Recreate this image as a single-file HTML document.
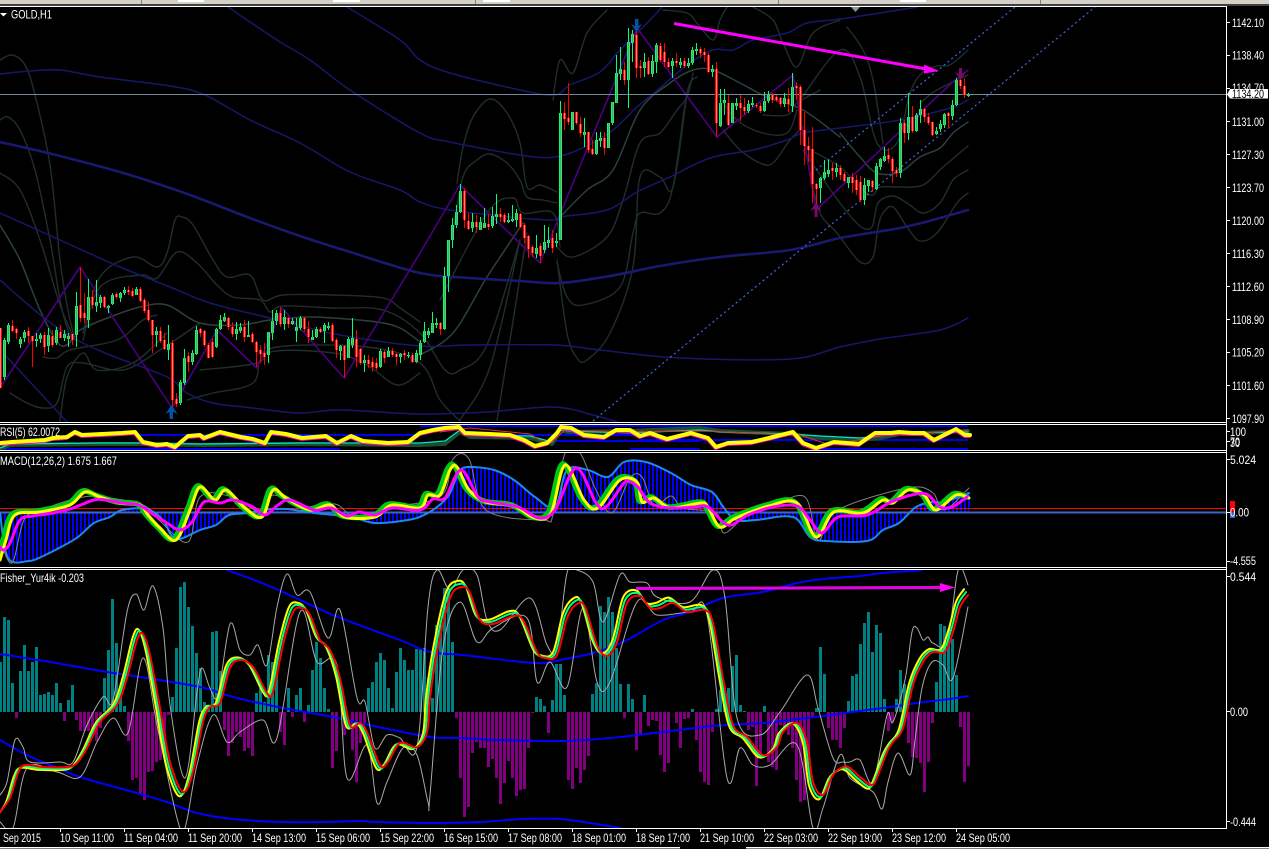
<!DOCTYPE html>
<html lang="en"><head><meta charset="utf-8"><title>GOLD,H1</title>
<style>
html,body{margin:0;padding:0;background:#000;width:1269px;height:849px;overflow:hidden}
svg{display:block}
text{font-family:"Liberation Sans",sans-serif;font-size:12px;fill:#fff}
.n{fill:none;stroke-linejoin:round;stroke-linecap:round}
</style></head><body>
<svg width="1269" height="849" viewBox="0 0 1269 849" xmlns="http://www.w3.org/2000/svg">
<defs>
<clipPath id="cm"><rect x="0" y="7" width="1226" height="415"/></clipPath>
<clipPath id="cr"><rect x="0" y="425" width="1226" height="25"/></clipPath>
<clipPath id="cd"><rect x="0" y="453" width="1226" height="114"/></clipPath>
<clipPath id="cf"><rect x="0" y="570" width="1226" height="258"/></clipPath>
<pattern id="hb" width="4" height="4" patternUnits="userSpaceOnUse"><rect x="0" y="0" width="2" height="4" fill="#0000ff"/></pattern>
<path id="gb" d="M4 340V377M8 325V342M20 339V344M24 332V338M36 339V341M40 335V339M48 335V346M56 330V343M64 334V338M68 336V339M76 306V335M88 297V320M96 302V306M100 297V303M108 306V308M112 295V304M120 293V298M124 290V293M136 289V295M156 331V335M168 344V350M180 382V403M184 358V383M192 353V362M196 330V354M216 329V347M220 320V329M224 317V321M236 329V334M240 327V331M248 335V337M268 332V355M272 321V333M276 313V321M284 317V324M292 321V324M296 327V331M300 318V328M312 337V340M316 329V337M324 325V331M328 326V328M340 346V351M348 339V358M352 338V345M364 360V363M380 351V367M388 351V357M400 354V357M408 355V356M416 353V362M420 343V355M424 331V342M428 331V335M432 323V333M436 323V325M444 276V329M448 240V276M452 225V240M456 212V225M460 191V212M472 222V228M480 222V230M484 223V228M492 216V226M496 214V217M508 220V222M512 219V221M516 213V220M536 248V254M544 242V250M548 240V243M556 241V243M560 113V240M572 112V130M584 132V135M596 140V154M600 138V141M608 123V148M612 102V123M616 73V103M620 69V74M628 42V80M632 34V43M644 62V68M652 61V74M656 45V62M672 61V66M680 62V65M688 63V66M692 50V63M696 49V51M712 69V72M720 103V126M724 100V103M732 103V123M736 103V106M748 104V111M752 103V105M764 101V111M768 95V101M784 98V104M792 87V106M820 178V188M824 172V178M828 170V174M836 168V172M848 177V183M864 185V200M868 180V186M876 166V189M880 159V167M884 156V161M900 123V173M908 117V133M916 115V131M920 109V115M936 131V134M940 124V129M944 114V125M952 105V116M956 80V105M968 95V96"/>
<path id="rb" d="M0 328V388M12 326V331M16 329V333M28 331V336M32 336V341M44 335V347M52 336V345M60 332V338M72 334V340M80 305V318M84 313V318M92 297V305M104 297V307M116 294V297M128 290V292M132 291V296M140 289V301M144 300V311M148 310V320M152 320V335M160 331V341M164 340V349M172 343V400M176 399V404M188 356V362M200 329V333M204 331V345M208 345V358M212 342V357M228 318V327M232 327V334M244 327V337M252 334V342M256 342V352M260 350V354M264 353V357M280 313V324M288 318V324M304 318V329M308 329V337M320 329V332M332 325V341M336 340V350M344 346V360M356 339V357M360 349V363M368 360V364M372 362V367M376 363V368M384 352V358M392 351V355M396 354V357M404 353V355M412 355V362M440 323V329M464 191V220M468 221V229M476 222V227M488 224V227M500 214V217M504 215V222M520 214V227M524 225V238M528 236V249M532 247V253M540 246V256M552 238V248M564 113V119M568 118V122M576 112V123M580 124V133M588 132V150M592 149V154M604 138V148M624 70V80M636 35V68M640 66V68M648 61V74M660 46V60M664 52V62M668 62V67M676 61V63M684 61V66M700 49V53M704 52V55M708 55V72M716 69V123M728 103V125M740 103V108M744 107V111M756 105V106M760 106V111M772 95V100M776 97V100M780 98V104M788 99V104M796 86V88M800 87V130M804 130V146M808 146V150M812 149V184M816 184V189M832 168V171M840 168V175M844 174V181M852 177V183M856 180V190M860 182V200M872 181V187M888 155V159M892 159V171M896 170V173M904 123V133M912 117V131M924 109V117M928 117V123M932 122V135M948 113V116M960 80V86M964 86V95"/>
<polyline id="fl" class="s" points="0,812 10,798 18,773 25,765 43,767 67,767 77,763 87,748 100,722 117,705 127,678 137,640 143,634 150,655 160,708 170,762 183,792 193,772 203,722 210,707 220,703 230,668 240,660 253,667 267,693 273,692 283,645 293,612 302,608 310,615 320,640 330,650 340,678 350,725 360,723 367,732 380,765 388,762 400,743 417,747 427,732 430,698 437,652 450,598 462,587 470,593 480,620 493,624 513,616 523,620 537,652 545,658 557,655 567,618 577,604 585,607 597,645 607,656 617,642 627,603 640,596 650,608 660,608 673,603 687,612 705,610 713,623 723,678 733,725 747,737 763,755 777,747 783,732 797,723 807,742 813,782 823,795 833,775 843,767 850,768 860,777 872,785 878,775 887,752 893,742 903,728 913,685 923,662 933,652 945,652 953,632 960,607 968,595"/>
<polyline id="my" class="s" points="0,560 6,540 15,515 40,512 70,505 85,492 100,497 120,503 140,505 148,515 160,528 176,540 190,510 200,487 215,500 226,490 245,508 262,517 273,490 286,498 310,510 330,505 345,517 375,517 392,505 420,508 428,495 440,495 450,470 457,467 469,490 486,502 514,506 535,518 551,513 565,465 584,500 598,508 620,480 637,482 642,502 654,498 671,508 701,503 708,507 720,527 736,518 769,506 797,503 816,537 834,512 863,513 883,500 893,503 908,490 924,495 936,510 956,495 969,498"/>
<polyline id="ry" points="0,443 12,442 45,440 53,438 67,437 75,432 82,435 102,434 122,433 135,432 143,442 157,445 167,444 175,447 188,436 200,435 204,438 220,432 241,437 253,439 265,443 271,432 286,434 302,438 314,437 326,436 337,443 351,436 363,441 388,443 408,442 420,433 433,430 445,428 459,427 465,433 490,434 510,435 524,440 535,446 547,443 557,433 561,427 571,428 584,435 604,437 616,430 630,430 640,436 650,433 667,439 691,433 708,438 716,447 728,443 752,442 769,438 793,432 803,443 816,448 834,442 859,444 875,433 891,433 899,432 912,433 924,433 934,440 956,429 965,435 970,435"/>
</defs>

<rect width="1269" height="849" fill="#000"/>

<!-- window chrome -->
<rect x="0" y="0" width="1269" height="4" fill="#d4d0c8"/>
<rect x="0" y="4" width="1269" height="2" fill="#404040"/>
<rect x="178" y="0" width="26" height="2" fill="#fff"/><rect x="333" y="0" width="27" height="2" fill="#fff"/>
<rect x="483" y="0" width="27" height="2" fill="#fff"/><rect x="900" y="0" width="26" height="2" fill="#fff"/>
<rect x="141" y="0" width="1" height="4" fill="#808080"/><rect x="475" y="0" width="1" height="4" fill="#808080"/><rect x="778" y="0" width="1" height="4" fill="#808080"/><rect x="1040" y="0" width="1" height="4" fill="#808080"/>

<!-- MAIN -->
<text x="11" y="18.5" textLength="41" lengthAdjust="spacingAndGlyphs">GOLD,H1</text>
<polygon points="0,13 7,13 3.5,16.5" fill="#fff"/>
<g clip-path="url(#cm)">
<g class="n" stroke="#1f2e2d" stroke-width="1.4" fill="none">
<polyline class="s" points="0,60 12,55 25,65 35,95 50,165 60,260 68,310 75,340"/>
<polyline class="s" points="0,120 8,117 20,130 35,170 50,240 60,300 68,330 75,340"/>
<polyline class="s" points="0,173 20,190 40,240 60,305 75,340"/>
<polyline class="s" points="83,333 100,277 133,257 157,267 167,253 175,220 182,217 193,225 213,260 227,277 250,275 263,300 283,295 333,295 383,298 400,308 420,322"/>
<polyline class="s" points="83,340 100,287 140,275 157,278 177,252 197,263 217,285 233,297 260,300 270,312 283,306 333,308 383,310 420,333 445,370 460,370 487,345 520,240"/>
<polyline class="s" points="10,393 27,403 43,408 57,403 67,367 83,363 123,370 160,350 200,323"/>
<polyline class="s" points="43,357 57,358 70,350 117,340 143,320 157,315"/>
<polyline class="s" points="200,370 257,363 277,347 367,347 420,363 440,400 460,421"/>
<polyline class="s" points="187,400 213,393 253,383 267,353 333,353 367,365 397,385 420,373"/>
<polyline class="s" points="60,421 67,377 83,353 97,370 133,363 167,333"/>
<polyline class="s" points="457,183 463,147 473,117 490,99 507,113 520,143 527,187 540,185 557,192"/>
<polyline class="s" points="453,233 463,177 477,160 490,154 507,163 520,180 527,197 543,200 557,203"/>
<polyline class="s" points="440,300 487,213 513,198 523,213 553,213 560,247"/>
<polyline class="s" points="460,420 490,367 520,240"/>
<polyline class="s" points="497,420 510,340 527,233"/>
<polyline class="s" points="557,260 567,333 577,358 587,360 610,333 633,267 640,177 660,177 673,187 687,93"/>
<polyline class="s" points="557,247 573,257 607,237 623,200 640,143 660,133 677,110 687,97 693,73"/>
<polyline class="s" points="557,263 567,297 583,305 620,287 633,233 640,213 660,213 673,187 687,93 697,77"/>
<polyline class="s" points="553,100 560,60 573,73 587,33 607,10"/>
<polyline class="s" points="663,10 687,13 697,23 713,40 720,20 727,7"/>
<polyline class="s" points="753,7 773,20 783,43 797,67 813,33 840,20"/>
<polyline class="s" points="717,93 737,120 763,133 787,133 797,110"/>
<polyline class="s" points="723,130 740,150 760,163 773,163 790,140 803,127"/>
<polyline class="s" points="763,115 787,115 797,103 820,90"/>
<polyline class="s" points="810,173 820,213 837,233 860,262 873,257 878,227 883,213 893,207 907,227 920,241 937,233 957,203 968,193"/>
<polyline class="s" points="803,150 840,203 860,226 872,227 878,203 893,196 907,203 923,213 940,203 953,180 968,170"/>
<polyline class="s" points="810,150 840,167 863,190 873,195 880,187 900,187 923,185 943,167 968,146"/>
<polyline class="s" points="847,27 863,50 873,80 883,143"/>
<polyline class="s" points="800,100 840,50 860,77 877,143 897,143 910,93 922,73 937,66 950,65 968,50"/>
<polyline class="s" points="920,103 937,90 968,75"/>
</g>
<g class="n" stroke="#2c403f" stroke-width="1.5" fill="none">
<polyline class="s" points="0,225 20,260 40,310 60,345 75,337 80,330 110,317 140,307 167,305 200,323 240,325 270,320 307,317 333,318 377,322 400,328 420,342"/>
<polyline class="s" points="420,355 453,333 487,277 523,223"/>
<polyline class="s" points="560,217 587,190 613,170 640,110 670,83 693,70 713,70 740,83 767,97 803,110 840,137"/>
<polyline class="s" points="840,133 860,157 877,173 900,172 920,157 940,148 953,133 968,122"/>
</g>
<g class="n" fill="none" stroke="#17176a">
<polyline class="s" stroke-width="1.5" points="228,7 250,22 280,42 310,60 350,90 420,133 450,142 520,155 555,157 587,146 613,130 637,107 660,88 687,65 713,50 733,50 753,40 787,33 807,23 840,19 880,13 917,7"/>
<polyline class="s" stroke-width="1.5" points="347,7 400,40 420,60 450,73 520,90 555,95 570,85 600,72 620,50 650,20 662,7"/>
<polyline class="s" stroke-width="1.5" points="0,74 30,71 60,70 100,77 170,86 205,95 250,120 300,143 350,172 400,190 420,202 450,210 520,218 557,220 560,217 607,210 637,192 670,177 710,158 753,150 787,140 803,133 840,128 900,120 950,108 968,100"/>
<polyline class="s" stroke="#191970" stroke-width="2.6" points="0,142 60,156 130,175 190,195 250,218 300,236 350,252 420,273 470,278 520,281 560,283 610,276 660,266 720,257 790,250 840,238 900,228 940,218 968,210"/>
<polyline class="s" stroke-width="1.5" points="0,213 60,240 120,267 170,287 210,303 270,318 340,335 420,346 470,345 555,345 600,350 680,358 790,359 840,347 880,339 940,330 968,318"/>
<polyline class="s" stroke-width="1.5" points="0,280 43,317 77,340 110,355 167,377 187,393 213,403 253,408 300,413 340,410 420,414 487,412 553,407 593,415 617,422"/>
<polyline stroke-width="1.5" points="7,357 67,422"/>
</g>
<polyline class="n" fill="none" stroke="#4b0082" stroke-width="1.6" points="0,388 80,267 172,408 217,330 257,368 282,308 344,378 420,253 460,185 540,263 637,28 717,137 793,75 816,210 955,80 968,70"/>
<g stroke="#4169e1" stroke-width="1.2" stroke-dasharray="2 3" fill="none">
<line x1="593" y1="421" x2="1095" y2="7"/>
<line x1="816" y1="170" x2="1015" y2="7"/>
</g>
<line x1="0" y1="94.5" x2="1227" y2="94.5" stroke="#778899" stroke-width="1"/>
<g transform="translate(.5,0)" shape-rendering="crispEdges" fill="none">
<path stroke="#00ff7f" stroke-width="1" d="M4 338V380M8 323V344M20 337V348M24 330V342M36 333V347M40 333V343M48 328V352M56 327V345M64 330V341M68 333V347M76 292V347M88 279V328M96 280V312M100 295V308M108 305V313M112 293V305M120 292V302M124 287V295M136 287V295M156 327V347M168 325V360M180 380V405M184 349V385M192 350V365M196 326V355M216 328V348M220 315V330M224 313V322M236 322V340M240 323V333M248 321V337M268 332V363M272 310V340M276 310V325M284 310V330M292 318V325M296 318V342M300 316V330M312 330V340M316 327V338M324 323V343M328 322V330M340 345V360M348 337V358M352 318V348M364 355V372M380 349V368M388 347V357M400 353V363M408 352V358M416 350V363M420 340V360M424 322V343M428 328V338M432 312V333M436 318V328M444 267V330M448 240V292M452 218V248M456 205V228M460 184V213M472 213V232M480 217V230M484 208V228M492 207V228M496 194V224M508 213V223M512 205V222M516 209V227M536 235V258M544 225V253M548 227V248M556 233V247M560 101V240M572 112V130M584 118V147M596 132V155M600 132V147M608 123V148M612 102V125M616 55V103M620 47V80M628 28V108M632 30V62M644 53V77M652 55V77M656 43V73M672 58V78M680 58V68M688 58V68M692 47V65M696 43V55M712 65V77M720 89V127M724 89V115M732 103V123M736 98V110M748 100V113M752 97V107M764 92V112M768 91V103M784 93V107M792 73V112M820 177V203M824 160V180M828 160V177M836 163V177M848 177V188M864 178V205M868 180V192M876 163V190M880 158V170M884 147V162M900 118V178M908 93V140M916 113V132M920 100V123M936 127V135M940 120V132M944 113V128M952 100V120M956 78V106M968 93V97"/>
<path stroke="#ff0000" stroke-width="1" d="M0 328V388M12 320V332M16 328V339M28 327V343M32 337V367M44 332V355M52 330V347M60 325V338M72 334V345M80 267V322M84 293V323M92 290V309M104 296V308M116 292V299M128 286V295M132 288V297M140 287V302M144 298V313M148 302V322M152 320V353M160 327V343M164 333V350M172 340V410M176 393V407M188 352V372M200 328V337M204 330V347M208 343V358M212 338V358M228 317V330M232 322V337M244 320V342M252 332V343M256 341V367M260 345V363M264 343V365M280 307V327M288 317V328M304 317V332M308 321V343M320 327V333M332 323V342M336 338V358M344 345V378M356 330V367M360 348V365M368 355V368M372 357V372M376 358V370M384 350V363M392 348V357M396 353V365M404 350V360M412 353V363M440 322V335M464 188V228M468 213V230M476 215V233M488 214V230M500 208V222M504 213V223M520 213V228M524 223V243M528 235V258M532 245V257M540 243V263M552 230V253M564 102V130M568 83V125M576 112V125M580 117V137M588 132V153M592 140V155M604 132V155M624 62V85M636 28V78M640 60V78M648 57V75M660 43V62M664 43V67M668 58V68M676 53V67M684 58V68M700 47V58M704 48V62M708 53V73M716 62V137M728 95V126M740 95V121M744 98V115M756 103V108M760 103V113M772 93V103M776 95V102M780 97V107M788 88V112M796 82V100M800 85V145M804 112V165M808 137V162M812 127V203M816 183V213M832 163V180M840 165V180M844 172V182M852 173V193M856 175V195M860 176V202M872 180V192M888 148V163M892 157V183M896 167V177M904 120V143M912 106V133M924 108V122M928 113V125M932 122V136M948 112V128M960 75V89M964 78V98"/>
<use href="#gb" stroke="#00ff7f" stroke-width="3"/><use href="#gb" stroke="#7e9a48" stroke-width="1"/>
<use href="#rb" stroke="#ff0000" stroke-width="3"/><use href="#rb" stroke="#ff8878" stroke-width="1"/>
</g>
<!-- trend arrow -->
<line x1="674" y1="23.5" x2="926" y2="69" stroke="#ff00ff" stroke-width="3"/>
<polygon points="939,71 924,64.5 924,73.5" fill="#ff00ff"/>
<!-- signal arrows -->
<g fill="#0054a8"><rect x="169.5" y="410" width="3.5" height="9"/><polygon points="171.5,405 165.5,414 171.5,411 177.5,414"/>
<rect x="635" y="19" width="3.5" height="9"/><polygon points="631,24 636.5,27 642,24 636.5,32"/></g>
<g fill="#7a0a6a"><rect x="814.5" y="205" width="3" height="12"/><polygon points="816,203 810,211 816,208 822,211"/>
<rect x="959" y="68" width="3" height="9"/><polygon points="955,72 960.5,75 966,72 960.5,80"/></g>
<polygon points="851,7 860,7 855.5,12" fill="#8a96a3"/>
</g>

<!-- RSI -->
<text x="0" y="436" textLength="60" lengthAdjust="spacingAndGlyphs">RSI(5) 62.0072</text>
<g clip-path="url(#cr)" fill="none" class="n">
<g stroke="#0000e8" stroke-width="2" stroke-linecap="butt">
<line x1="0" y1="449" x2="340" y2="449"/><line x1="140" y1="435" x2="420" y2="435"/><line x1="485" y1="435" x2="640" y2="435"/><line x1="540" y1="441" x2="700" y2="441"/>
<line x1="630" y1="449" x2="700" y2="449"/><line x1="820" y1="449" x2="968" y2="449"/><line x1="420" y1="426" x2="968" y2="426"/><line x1="640" y1="440" x2="968" y2="440"/>
</g>
<polyline stroke="#1a4d2e" stroke-width="4" points="0,449 10,445 100,444 140,444 200,445 300,444 420,445 445,444 460,432 470,437 530,438 552,444 560,431 570,432 630,431 700,428 720,431 790,434 820,438 860,440 880,438 900,434 968,431"/>
<polyline stroke="#00e6c8" stroke-width="1.3" points="0,448 10,444 100,443 140,443 200,444 300,443 420,443 445,441 460,430 470,435 530,436 552,442 560,430 570,431 630,433 700,430 720,432 790,434 820,436 860,438 880,436 900,433 968,432"/>
<polyline stroke="#e03030" stroke-width="1" points="440,432 470,428 530,434 548,445 565,430 620,432 700,431 800,435 830,445 880,436 968,430"/>
<use href="#ry" stroke="#ff00c0" stroke-width="3.5" transform="translate(-.5,1.2)"/>
<use href="#ry" stroke="#ffff00" stroke-width="4"/>
</g>

<!-- MACD -->
<g clip-path="url(#cd)">
<polyline class="s" fill="url(#hb)" points="0,512 8,558 29,561 41,557 61,547 78,537 94,523 110,517 122,511 147,511 163,520 171,535 180,539 200,530 216,525 229,515 249,513 261,511 286,511 314,513 351,517 375,523 408,520 424,515 437,507 449,495 459,472 469,467 494,470 514,480 535,497 555,507 567,470 588,470 608,477 624,462 646,462 671,473 691,485 712,492 724,508 736,512 736,520 756,520 793,517 810,537 826,541 867,541 883,530 899,523 916,507 932,502 944,502 969,493 969,512"/>
<line x1="0" y1="512.5" x2="1227" y2="512.5" stroke="#3a66c8" stroke-width="2"/>
<line x1="0" y1="508.5" x2="1227" y2="508.5" stroke="#ff0000" stroke-width="1"/>
<polyline class="n s" fill="none" stroke="#1e88f0" stroke-width="2" points="0,513 8,558 29,561 41,557 61,547 78,537 94,523 110,517 122,510 147,509 163,520 171,535 180,539 200,530 216,525 229,515 249,513 261,510 286,509 314,513 351,517 375,523 408,520 424,515 437,507 449,495 459,472 469,467 494,470 514,480 535,497 555,507 567,470 588,470 608,477 624,462 646,462 671,473 691,485 712,492 724,508 736,520 756,520 793,517 810,537 826,541 867,541 883,530 899,523 916,507 932,502 944,502 969,493"/>
<polyline class="n s" fill="none" stroke="#808080" stroke-width="1" points="0,540 12,563 24,520 41,510 78,498 102,497 143,505 159,520 188,542 200,497 229,496 261,512 273,495 310,510 335,504 355,516 392,507 441,496 453,459 469,459 486,510 543,520 553,515 565,453 580,453 596,490 612,513 630,478 642,477 654,505 671,496 683,508 716,513 724,533 744,518 773,506 805,497 818,540 838,510 907,488 932,492 944,510 969,488"/>
<use href="#my" class="n" fill="none" stroke="#00c814" stroke-width="5.5" transform="translate(-2.5,-1)"/>
<use href="#my" class="n" fill="none" stroke="#ffff00" stroke-width="3"/>
<polyline class="n s" fill="none" stroke="#ff00ff" stroke-width="3" points="0,547 4,550 10,543 20,520 33,516 53,513 73,508 94,500 106,500 122,503 139,505 151,513 167,523 180,530 192,522 204,502 220,503 233,500 253,507 265,515 278,505 290,500 314,510 331,508 347,516 359,512 375,515 392,508 420,510 433,499 445,498 461,470 478,497 490,502 518,507 539,518 555,510 576,468 596,503 606,507 624,483 630,482 638,487 650,503 671,508 695,507 708,507 728,525 748,515 773,507 797,506 810,520 822,533 838,517 867,515 891,502 916,494 928,495 940,507 952,507 967,497"/>
</g>
<text x="0" y="465" textLength="117" lengthAdjust="spacingAndGlyphs">MACD(12,26,2) 1.675 1.667</text>

<!-- FISHER -->
<g clip-path="url(#cf)">
<g fill="none" stroke="#008080" stroke-width="3" shape-rendering="crispEdges" transform="translate(.5,0)">
<path d="M0 662V712M4 617V712M8 620V712M12 683V712M20 671V712M24 645V712M28 671V712M32 662V712M36 647V712M40 695V712M44 694V712M48 692V712M52 695V712M56 683V712M60 703V712M68 700V712M72 685V712M104 678V712M108 650V712M112 599V712M116 643V712M120 698V712M124 706V712M172 697V712M176 648V712M180 587V712M184 582V712M188 607V712M192 626V712M196 653V712M200 668V712M204 702V712M208 705V712M212 632V712M216 631V712M220 671V712M256 693V712M260 688V712M264 702V712M268 655V712M272 662V712M276 670V712M288 688V712M296 695V712M300 688V712M308 705V712M312 670V712M316 642V712M320 658V712M324 688V712M328 709V712M368 688V712M372 682V712M376 662V712M380 653V712M384 660V712M388 688V712M392 708V712M396 672V712M400 648V712M404 660V712M408 670V712M412 670V712M416 649V712M420 649V712M424 648V712M428 678V712M432 698V712M436 625V712M440 625V712M444 588V712M448 588V712M452 642V712M536 697V712M540 699V712M544 706V712M552 700V712M556 664V712M560 664V712M564 695V712M592 694V712M596 683V712M600 606V712M604 612V712M608 597V712M612 612V712M616 648V712M620 684V712M628 684V712M632 699V712M644 695V712M692 709V712M716 709V712M720 690V712M724 688V712M728 688V712M732 666V712M736 655V712M740 705V712M744 711V712M764 706V712M816 708V712M820 647V712M824 674V712M848 701V712M852 676V712M856 674V712M860 644V712M864 623V712M868 612V712M872 652V712M876 625V712M880 633V712M884 699V712M896 699V712M900 670V712M904 684V712M936 682V712M940 624V712M944 626V712M948 633V712M952 639V712M956 675V712"/>
</g>
<g fill="none" stroke="#800080" stroke-width="3" shape-rendering="crispEdges" transform="translate(.5,0)">
<path d="M16 712V718M64 712V721M76 712V720M80 712V731M84 712V731M88 712V731M92 712V735M96 712V741M100 712V728M128 712V741M132 712V780M136 712V778M140 712V795M144 712V800M148 712V772M152 712V771M156 712V762M160 712V760M164 712V757M168 712V715M224 712V730M228 712V756M232 712V743M236 712V732M240 712V737M244 712V751M248 712V748M252 712V756M280 712V732M284 712V745M292 712V717M304 712V722M332 712V768M336 712V751M344 712V735M352 712V750M356 712V782M360 712V743M364 712V723M456 712V718M460 712V778M464 712V817M468 712V807M472 712V753M476 712V742M480 712V748M484 712V748M488 712V767M492 712V759M496 712V778M500 712V804M504 712V783M508 712V761M512 712V778M516 712V796M520 712V790M524 712V789M528 712V748M532 712V713M548 712V733M568 712V780M572 712V789M576 712V768M580 712V783M584 712V770M588 712V756M624 712V718M636 712V750M640 712V734M648 712V726M652 712V720M656 712V721M660 712V755M664 712V772M668 712V763M676 712V723M680 712V748M684 712V719M688 712V718M696 712V740M700 712V772M704 712V782M708 712V785M712 712V732M748 712V730M752 712V727M756 712V786M760 712V757M768 712V762M772 712V767M776 712V770M780 712V725M784 712V730M788 712V735M792 712V748M796 712V780M800 712V802M804 712V800M808 712V760M812 712V717M828 712V728M832 712V740M836 712V740M840 712V748M844 712V728M888 712V731M892 712V722M908 712V743M912 712V757M916 712V758M920 712V763M924 712V792M928 712V762M932 712V723M960 712V727M964 712V782M968 712V766"/>
</g>
<g class="n" fill="none" stroke="#0000ff" stroke-width="2">
<polyline class="s" points="227,570 267,585 300,600 333,615 367,628 400,640 430,652 463,655 513,661 543,663 570,658 597,652 627,640 663,620 690,612 723,598 763,592 797,583 823,579 860,576 883,573 922,570"/>
<polyline class="s" points="0,654 50,662 107,672 140,677 200,687 233,697 283,708 333,717 383,728 430,737 460,738 497,740 563,741 610,738 663,732 713,726 763,723 807,718 860,711 883,708 917,703 950,699 968,696"/>
<polyline class="s" points="0,740 27,755 57,768 83,778 133,792 167,802 197,813 233,819 283,822 327,822 360,821 377,822 430,823 480,822 523,819 560,819 590,823 620,828"/>
</g>
<g class="n" fill="none" stroke="#a9a9a9" stroke-width="1">
<polyline class="s" points="0,795 7,782 15,740 23,747 30,762 60,762 73,762 87,725 103,697 113,700 127,612 136,594 144,610 153,586 163,628 170,705 185,778 197,692 202,668 210,688 218,695 230,624 240,650 250,655 258,645 267,665 277,607 287,574 297,595 310,592 328,638 340,610 357,698 365,702 375,748 387,735 400,738 417,747 428,607 437,570 450,590 463,570 477,575 487,620 500,630 530,598 547,645 557,648 567,573 577,570 593,582 603,622 620,575 630,582 647,583 657,597 690,602 713,570 725,598 737,718 760,735 780,712 807,675 818,708 833,758 843,762 850,762 860,760 873,782 887,715 893,722 905,680 912,632 917,628 923,640 928,637 933,643 947,642 957,575 962,569 968,585"/>
<polyline class="s" points="0,822 13,828 27,768 57,772 80,777 97,742 113,718 128,733 143,658 157,725 177,818 185,828 197,765 213,715 227,742 240,732 263,720 277,738 300,612 317,662 337,665 347,778 367,745 377,803 387,782 403,748 417,755 428,802 430,795 443,648 460,602 477,642 493,628 527,618 537,682 550,662 567,687 583,608 597,682 610,682 637,602 657,615 690,612 707,615 727,778 740,748 753,765 770,765 797,745 813,828 823,808 840,755 850,778 873,792 882,809 888,782 898,753 910,775 915,740 922,688 932,662 943,665 953,678 968,607"/>
</g>
<use href="#fl" class="n" fill="none" stroke="#ffff00" stroke-width="2" transform="translate(-4,-35.5) scale(1,1.05)"/>
<use href="#fl" class="n" fill="none" stroke="#00ff7f" stroke-width="2" transform="translate(-2,-17.8) scale(1,1.025)"/>
<use href="#fl" class="n" fill="none" stroke="#ff0000" stroke-width="2"/>
<line x1="636" y1="588.5" x2="942" y2="587.5" stroke="#e800e8" stroke-width="3"/>
<polygon points="955,587.5 940,583 940,592" fill="#ff00ff"/>
</g>
<text x="0" y="582" textLength="84" lengthAdjust="spacingAndGlyphs">Fisher_Yur4ik -0.203</text>

<!-- frames -->
<g fill="#fff" shape-rendering="crispEdges">
<rect x="0" y="6" width="1227" height="1"/>
<rect x="0" y="422" width="1227" height="1"/><rect x="0" y="424" width="1227" height="1"/>
<rect x="0" y="450" width="1227" height="1"/><rect x="0" y="452" width="1227" height="1"/>
<rect x="0" y="567" width="1227" height="1"/><rect x="0" y="569" width="1227" height="1"/>
<rect x="0" y="828" width="1227" height="1"/>
<rect x="1226" y="6" width="1" height="823"/>
<rect x="0" y="847" width="680" height="1.5"/><rect x="746" y="847" width="523" height="1.5"/>
<path d="M1227 22h3v1h-3zM1227 55h3v1h-3zM1227 88h3v1h-3zM1227 121h3v1h-3zM1227 154h3v1h-3zM1227 187h3v1h-3zM1227 220h3v1h-3zM1227 253h3v1h-3zM1227 286h3v1h-3zM1227 319h3v1h-3zM1227 352h3v1h-3zM1227 385h3v1h-3zM1227 418h3v1h-3zM1227 431h3v1h-3zM1227 441h3v1h-3zM1227 459h3v1h-3zM1227 512h3v1h-3zM1227 561h3v1h-3zM1227 576h3v1h-3zM1227 711h3v1h-3zM1227 821h3v1h-3z"/>
<path d="M60 829h1v3h-1zM124 829h1v3h-1zM188 829h1v3h-1zM252 829h1v3h-1zM316 829h1v3h-1zM380 829h1v3h-1zM444 829h1v3h-1zM508 829h1v3h-1zM572 829h1v3h-1zM636 829h1v3h-1zM700 829h1v3h-1zM764 829h1v3h-1zM828 829h1v3h-1zM892 829h1v3h-1zM956 829h1v3h-1z"/>
</g>

<!-- price axis -->
<g>
<text x="1232" y="27" textLength="32" lengthAdjust="spacingAndGlyphs">1142.10</text>
<text x="1232" y="59.5" textLength="32" lengthAdjust="spacingAndGlyphs">1138.40</text>
<text x="1232" y="92" textLength="32" lengthAdjust="spacingAndGlyphs">1134.70</text>
<text x="1232" y="126" textLength="32" lengthAdjust="spacingAndGlyphs">1131.00</text>
<text x="1232" y="159" textLength="32" lengthAdjust="spacingAndGlyphs">1127.30</text>
<text x="1232" y="192" textLength="32" lengthAdjust="spacingAndGlyphs">1123.70</text>
<text x="1232" y="225" textLength="32" lengthAdjust="spacingAndGlyphs">1120.00</text>
<text x="1232" y="258" textLength="32" lengthAdjust="spacingAndGlyphs">1116.30</text>
<text x="1232" y="291" textLength="32" lengthAdjust="spacingAndGlyphs">1112.60</text>
<text x="1232" y="324" textLength="32" lengthAdjust="spacingAndGlyphs">1108.90</text>
<text x="1232" y="356.5" textLength="32" lengthAdjust="spacingAndGlyphs">1105.20</text>
<text x="1232" y="390" textLength="32" lengthAdjust="spacingAndGlyphs">1101.60</text>
<text x="1232" y="423" textLength="32" lengthAdjust="spacingAndGlyphs">1097.90</text>
</g>
<polygon points="1227,94.5 1230,89 1268,89 1268,98.5 1230,98.5" fill="#fff"/>
<text x="1232" y="98" textLength="32" lengthAdjust="spacingAndGlyphs" style="fill:#000">1134.20</text>
<text x="1230" y="436" textLength="16" lengthAdjust="spacingAndGlyphs">100</text>
<text x="1230" y="446" textLength="10" lengthAdjust="spacingAndGlyphs">70</text>
<text x="1230" y="447" textLength="10" lengthAdjust="spacingAndGlyphs">30</text>
<text x="1230" y="464" textLength="26" lengthAdjust="spacingAndGlyphs">5.024</text>
<rect x="1230" y="501" width="5" height="11" fill="#ff0000"/>
<rect x="1230" y="512" width="5" height="6" fill="#3a66c8"/>
<text x="1230" y="516.5" textLength="19" lengthAdjust="spacingAndGlyphs">0.00</text>
<text x="1230" y="565" textLength="26" lengthAdjust="spacingAndGlyphs">-4.555</text>
<text x="1230" y="581" textLength="26" lengthAdjust="spacingAndGlyphs">0.544</text>
<text x="1230" y="716" textLength="18" lengthAdjust="spacingAndGlyphs">0.00</text>
<text x="1230" y="826" textLength="26" lengthAdjust="spacingAndGlyphs">-0.444</text>

<!-- time axis -->
<g>
<text x="3" y="842" textLength="38" lengthAdjust="spacingAndGlyphs">Sep 2015</text>
<text x="60" y="842" textLength="54" lengthAdjust="spacingAndGlyphs">10 Sep 11:00</text>
<text x="124" y="842" textLength="54" lengthAdjust="spacingAndGlyphs">11 Sep 04:00</text>
<text x="188" y="842" textLength="54" lengthAdjust="spacingAndGlyphs">11 Sep 20:00</text>
<text x="252" y="842" textLength="54" lengthAdjust="spacingAndGlyphs">14 Sep 13:00</text>
<text x="316" y="842" textLength="54" lengthAdjust="spacingAndGlyphs">15 Sep 06:00</text>
<text x="380" y="842" textLength="54" lengthAdjust="spacingAndGlyphs">15 Sep 22:00</text>
<text x="444" y="842" textLength="54" lengthAdjust="spacingAndGlyphs">16 Sep 15:00</text>
<text x="508" y="842" textLength="54" lengthAdjust="spacingAndGlyphs">17 Sep 08:00</text>
<text x="572" y="842" textLength="54" lengthAdjust="spacingAndGlyphs">18 Sep 01:00</text>
<text x="636" y="842" textLength="54" lengthAdjust="spacingAndGlyphs">18 Sep 17:00</text>
<text x="700" y="842" textLength="54" lengthAdjust="spacingAndGlyphs">21 Sep 10:00</text>
<text x="764" y="842" textLength="54" lengthAdjust="spacingAndGlyphs">22 Sep 03:00</text>
<text x="828" y="842" textLength="54" lengthAdjust="spacingAndGlyphs">22 Sep 19:00</text>
<text x="892" y="842" textLength="54" lengthAdjust="spacingAndGlyphs">23 Sep 12:00</text>
<text x="956" y="842" textLength="54" lengthAdjust="spacingAndGlyphs">24 Sep 05:00</text>
</g>
</svg>
<script>
(function(){
var NS="http://www.w3.org/2000/svg";
var list=document.querySelectorAll("polyline.s");
for(var k=0;k<list.length;k++){
  var p=list[k],a=p.getAttribute("points").trim().split(/[\s,]+/).map(Number),t=[];
  for(var i=0;i<a.length;i+=2)t.push([a[i],a[i+1]]);
  var n=t.length,d="M"+t[0][0]+" "+t[0][1];
  for(i=0;i<n-1;i++){
    var p0=t[Math.max(i-1,0)],p1=t[i],p2=t[i+1],p3=t[Math.min(i+2,n-1)];
    d+="C"+(p1[0]+(p2[0]-p0[0])/6).toFixed(1)+" "+(p1[1]+(p2[1]-p0[1])/6).toFixed(1)+" "+(p2[0]-(p3[0]-p1[0])/6).toFixed(1)+" "+(p2[1]-(p3[1]-p1[1])/6).toFixed(1)+" "+p2[0]+" "+p2[1];
  }
  var q=document.createElementNS(NS,"path");
  for(var j=0;j<p.attributes.length;j++){var at=p.attributes[j];if(at.name!=="points")q.setAttribute(at.name,at.value);}
  q.setAttribute("d",d);
  p.parentNode.replaceChild(q,p);
}
})();
</script>
</body></html>
